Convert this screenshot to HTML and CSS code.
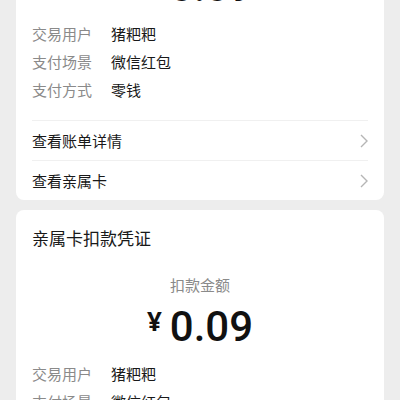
FILE: index.html
```html
<!DOCTYPE html>
<html lang="zh-CN">
<head>
<meta charset="utf-8">
<link rel="stylesheet" href="styles.css">
</head>
<body>
<div class="page">
  <section class="card card-first">
    <h2 class="card-title">亲属卡支付凭证</h2>
    <div class="amount-label">支付金额</div>
    <div class="amount"><span class="yen">¥</span><span class="num">0.09</span></div>
    <div class="rows">
      <div class="row"><span class="label">交易用户</span><span class="value">猪粑粑</span></div>
      <div class="row"><span class="label">支付场景</span><span class="value">微信红包</span></div>
      <div class="row"><span class="label">支付方式</span><span class="value">零钱</span></div>
    </div>
    <div class="links">
      <div class="link"><span>查看账单详情</span><svg class="chev" width="8" height="14" viewBox="0 0 8 14"><path d="M1 1l6 6-6 6" fill="none" stroke="#b5b5b5" stroke-width="1.4"/></svg></div>
      <div class="link"><span>查看亲属卡</span><svg class="chev" width="8" height="14" viewBox="0 0 8 14"><path d="M1 1l6 6-6 6" fill="none" stroke="#b5b5b5" stroke-width="1.4"/></svg></div>
    </div>
  </section>
  <section class="card">
    <h2 class="card-title">亲属卡扣款凭证</h2>
    <div class="amount-label">扣款金额</div>
    <div class="amount"><span class="yen">¥</span><span class="num">0.09</span></div>
    <div class="rows">
      <div class="row"><span class="label">交易用户</span><span class="value">猪粑粑</span></div>
      <div class="row"><span class="label">支付场景</span><span class="value">微信红包</span></div>
      <div class="row"><span class="label">支付方式</span><span class="value">零钱</span></div>
    </div>
  </section>
</div>
</body>
</html>
```
FILE: styles.css
```css
* { box-sizing: border-box; }
html, body {
  margin: 0;
  padding: 0;
  background: #ededed;
  overflow: hidden;
  height: 400px;
}
body {
  font-family: "Noto Sans CJK SC", "Noto Sans", sans-serif;
  color: #191919;
}
.page {
  padding: 0 16px;
  display: flex;
  flex-direction: column;
  gap: 10px;
}
.card-first { margin-top: -130px; }
.card {
  background: #fff;
  border-radius: 8px;
  padding: 16px 16px 0;
}
.card-title {
  margin: 0;
  font-size: 17px;
  line-height: 24px;
  font-weight: 400;
  color: #191919;
}
.amount-label {
  margin-top: 25px;
  text-align: center;
  font-size: 15px;
  line-height: 20px;
  color: #8a8a8a;
}
.amount {
  margin-top: 7px;
  display: flex;
  justify-content: center;
  align-items: flex-start;
  gap: 8px;
  height: 50px;
}
.yen {
  font-family: "Noto Sans", sans-serif;
  font-size: 26px;
  line-height: 50px;
  font-weight: 700;
  position: relative;
  top: -6px;
  color: #111;
}
.num {
  font-family: Roboto, "Noto Sans", sans-serif;
  font-size: 42px;
  line-height: 50px;
  font-weight: 500;
  color: #111;
}
.rows {
  margin-top: 8px;
  padding-bottom: 16px;
}
.row {
  display: flex;
  font-size: 15px;
  line-height: 28px;
}
.label {
  width: 79px;
  color: #8a8a8a;
  flex: none;
}
.value { color: #191919; }
.link {
  display: flex;
  align-items: center;
  justify-content: space-between;
  height: 40px;
  border-top: 1px solid #f0f0f0;
  font-size: 15px;
  color: #191919;
}
```
